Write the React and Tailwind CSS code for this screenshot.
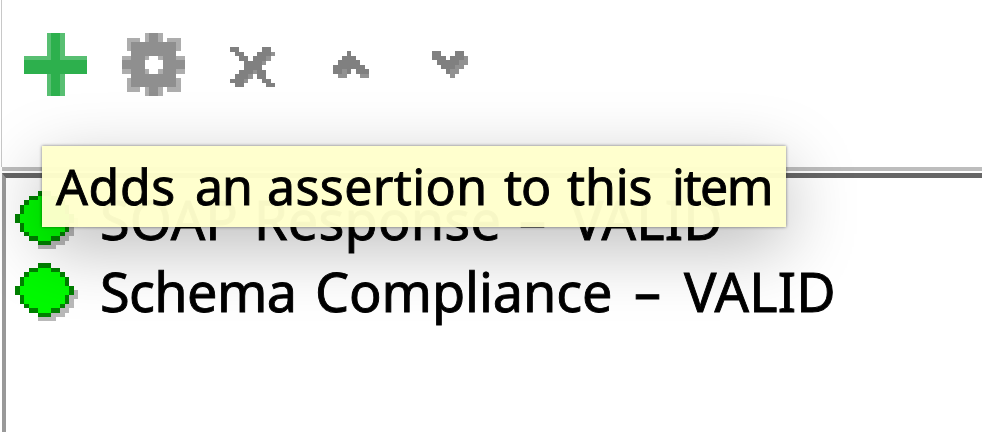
const PLUS = [
  '.....o##o.....', '.....o##o.....', '.....o##o.....', '.....o##o.....', '.....o##o.....',
  'oooooo##oooooo', '##############', '##############', '##############',
  '.....o##o.....', '.....o##o.....', '.....o##o.....', '.....o##o.....', '.....o##o.....',
];
const GEAR = [
  '.....o##o.....', '.ooo.o##o.ooo.', '.o##########o.', '.o##########o.', '..##########..',
  'oo###o..o###oo', '#####....#####', '#####....#####', 'oo###o..o###oo',
  '..##########..', '.o##########o.', '.o##########o.', '.ooo.o##o.ooo.', '.....o##o.....',
];
const CROSS = [
  '##.....##.', '.##...###o', '..##.###o.', '...####o..', '...####...',
  '..###o##..', '.###o.##..', '###o...##.', '.##.....##',
];
const UP = ['...#....', '..###...', '.#####..', '#######.', '##o#.###', '.oo...oo'];
const DOWN = ['##...##.', '###.###o', '.#####oo', '..###oo.', '...#oo..', '....o...'];
const DISC = [
  '.....ddd......', '...dd###dd....', '..d#######d...', '.d#########d..', '.d#########d..',
  'd###########d.', 'd###########ds', '.d#########dss', '.d#########ds.',
  '..d#######dss.', '...dd###ddss..', '.....dddsss...', '.....ssss.....',
];

function PixelArt({ rows, colors, className }) {
  const width = rows[0].length;
  return (
    <svg className={className} viewBox={`0 0 ${width} ${rows.length}`} preserveAspectRatio="none" shapeRendering="crispEdges">
      {rows.flatMap((row, y) =>
        [...row].map((c, x) => (c === '.' ? null : <rect key={`${x}-${y}`} x={x} y={y} width="1" height="1" fill={colors[c]} />)),
      )}
    </svg>
  );
}

const green = { '#': '#2db04d', o: '#58bf72' };
const gray = { '#': '#8f8f8f', o: '#adadad' };
const dark = { '#': '#808080', o: '#929292' };
const disc = { '#': '#00fa00', d: '#008000', s: '#b9b9b9' };

function Assertion({ children }) {
  return (
    <li className="flex h-[72px] items-start">
      <PixelArt rows={DISC} colors={disc} className="ml-[8.6px] mt-[12.5px] h-[58.5px] w-[63px] shrink-0" />
      <div className="ml-[22.4px] mt-[5px] flex h-[72px] items-center whitespace-nowrap text-[54px] leading-[72px] [-webkit-text-stroke:0.9px_black]">{children}</div>
    </li>
  );
}

export default function App() {
  return (
    <div className="relative flex h-[432px] w-[982px] flex-col overflow-hidden bg-white font-['Noto_Sans','Open_Sans',sans-serif] text-black">
      <div className="ml-px flex h-[167px] items-start border-l border-[#c8c8c8]">
        <PixelArt rows={PLUS} colors={green} className="ml-[22px] mt-[33px] h-[63px] w-[63px]" />
        <PixelArt rows={GEAR} colors={gray} className="ml-[35px] mt-[33px] h-[63px] w-[63px]" />
        <PixelArt rows={CROSS} colors={dark} className="ml-[45px] mt-[46.7px] h-[40.5px] w-[45px]" />
        <PixelArt rows={UP} colors={dark} className="ml-[58.3px] mt-[51.3px] h-[27px] w-[36px]" />
        <PixelArt rows={DOWN} colors={dark} className="ml-[62.7px] mt-[51.3px] h-[27px] w-[36px]" />
      </div>
      <div className="ml-[2px] h-[4px] bg-[#bdbdbd]" />
      <div className="ml-[2px] mt-[2px] flex-1 border-l-4 border-t-[5px] border-l-[#999] border-t-[#666]">
        <ul>
          <Assertion>
            <span className="w-[154px]">SOAP</span>
            <span className="w-[265px] tracking-[0.2px]">Response</span>
            <span className="w-[52px]">–</span>
            <span className="tracking-[0.2px]">VALID</span>
          </Assertion>
          <Assertion>
            <span className="w-[215px] tracking-[-0.6px]">Schema</span>
            <span className="w-[319px] tracking-[-0.1px]">Compliance</span>
            <span className="w-[50px]">–</span>
            <span className="tracking-[0.2px]">VALID</span>
          </Assertion>
        </ul>
      </div>
      <div className="absolute left-[42px] top-[146px] flex h-[81px] w-[744px] items-center whitespace-nowrap bg-[#ffffcc]/[0.97] pl-[14px] text-[50px] shadow-[0_0_3px_rgba(0,0,0,0.5),0_20px_70px_rgba(0,0,0,0.27)] [-webkit-text-stroke:0.9px_black]">
        <span className="w-[139px] tracking-[0.6px]">Adds</span>
        <span className="w-[72px] tracking-[-1px]">an</span>
        <span className="w-[237px] tracking-[0.4px]">assertion</span>
        <span className="w-[63px] tracking-[-1px]">to</span>
        <span className="w-[105px] tracking-[-0.1px]">this</span>
        <span className="tracking-[-1.5px]">item</span>
      </div>
    </div>
  );
}
